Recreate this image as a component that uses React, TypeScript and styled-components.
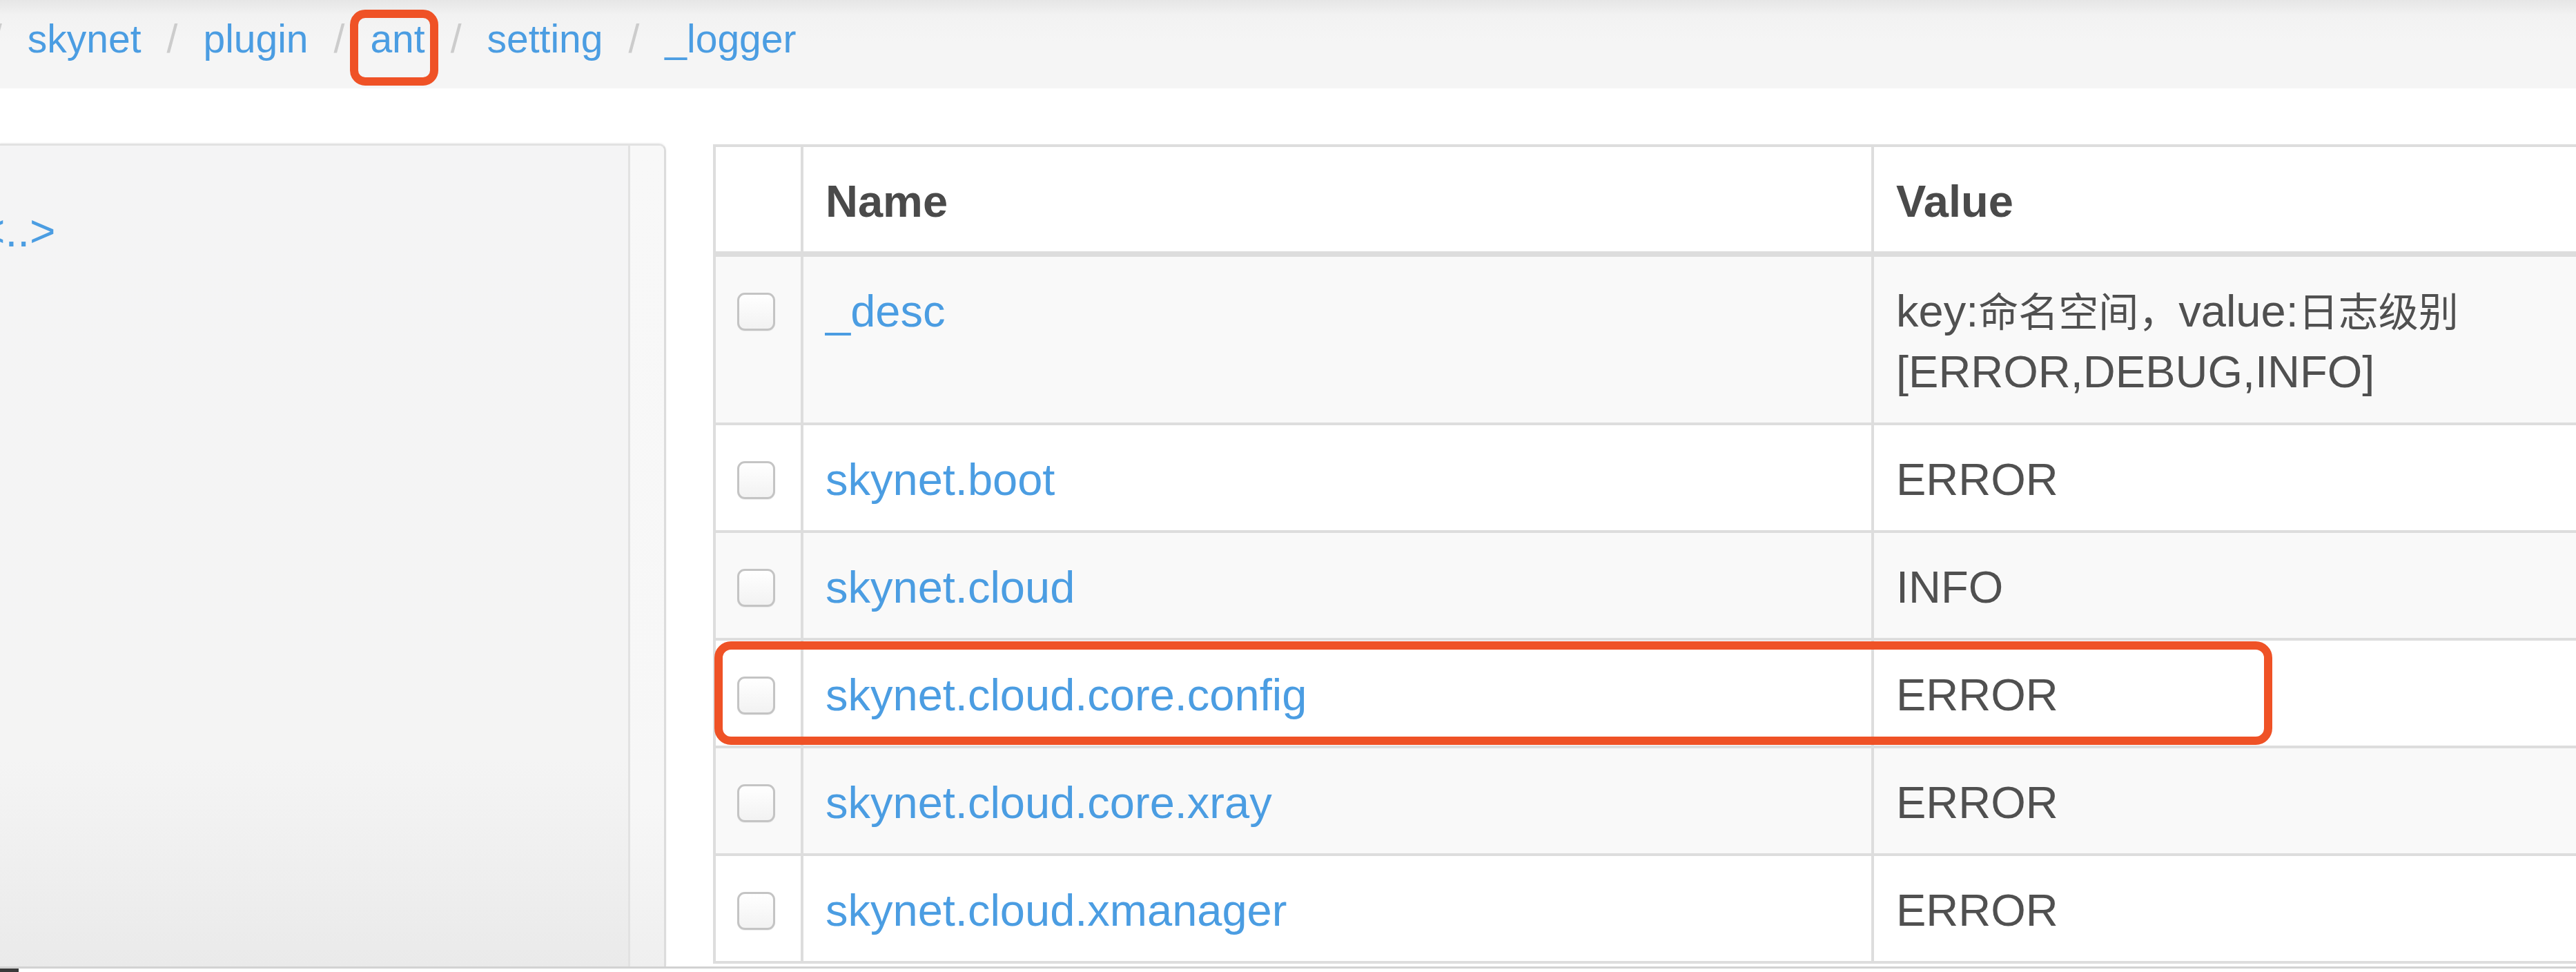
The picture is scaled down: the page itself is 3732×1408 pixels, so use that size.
import React from "react";
import styled, { createGlobalStyle } from "styled-components";

const GlobalStyle = createGlobalStyle`
  html, body {
    margin: 0;
    padding: 0;
    background: #ffffff;
    overflow: hidden;
  }
  body {
    font-family: "Liberation Sans", Arial, "Noto Sans CJK SC", sans-serif;
  }
  #root {
    width: 3732px;
    height: 1408px;
    overflow: hidden;
  }
`;

const Page = styled.div`
  width: 3732px;
  height: 1408px;
  display: flex;
  flex-direction: column;
  overflow: hidden;
`;

const BreadcrumbBar = styled.nav`
  flex: none;
  height: 128px;
  box-sizing: border-box;
  padding-top: 16px;
  background: linear-gradient(#e6e6e6 0px, #f2f2f2 22px, #f5f5f5 60px);
`;

const Crumbs = styled.ol`
  list-style: none;
  margin: 0 0 0 -13px;
  padding: 0;
  display: flex;
  gap: 37px;
  font-size: 57px;
  line-height: 80px;
  white-space: nowrap;
`;

const Crumb = styled.li`
  display: flex;
  &::before {
    content: "/";
    color: #cccccc;
    padding-right: 37px;
  }
`;

const CrumbLink = styled.a<{ $marked?: boolean }>`
  position: relative;
  display: inline-block;
  color: #4b9de2;
  text-decoration: none;
  ${(p) =>
    p.$marked
      ? `
    &::after {
      content: "";
      position: absolute;
      left: -29px;
      right: -19px;
      top: -2px;
      bottom: -28px;
      border: 12px solid #ef5226;
      border-radius: 22px;
      box-sizing: border-box;
    }
  `
      : ""}
`;

const Main = styled.main`
  flex: 1;
  min-height: 0;
  display: flex;
  align-items: stretch;
  gap: 68px;
  padding-top: 80px;
  box-sizing: border-box;
`;

const FilePanel = styled.aside`
  flex: none;
  width: 965px;
  display: flex;
  box-sizing: border-box;
  border-top: 3px solid #e2e2e2;
  border-right: 3px solid #dcdcdc;
  border-top-right-radius: 10px;
  box-shadow: 0 -1px 3px rgba(0, 0, 0, 0.05);
  overflow: hidden;
`;

const TreeList = styled.div`
  flex: none;
  width: 910px;
  padding-top: 80px;
  box-sizing: border-box;
  background: linear-gradient(#f4f4f5 0%, #f4f4f4 75%, #eaeaea 100%);
`;

const TreeRail = styled.div`
  flex: 1;
  border-left: 3px solid #e2e2e2;
  background: linear-gradient(#f8f8f8 0%, #f7f7f7 80%, #efefef 100%);
`;

const ParentLink = styled.a`
  display: block;
  margin-left: -30px;
  font-size: 64px;
  line-height: 88px;
  color: #4b9de2;
  text-decoration: none;
`;

const TableWrap = styled.section`
  flex: none;
  width: 2800px;
  margin-top: 1px;
`;

const Table = styled.table`
  width: 100%;
  table-layout: fixed;
  border-collapse: separate;
  border-spacing: 0;
  border-top: 4px solid #dddddd;
  border-left: 4px solid #dddddd;
  font-size: 65px;
  line-height: 88px;
  color: #505050;
`;

const HeadCell = styled.th`
  box-sizing: border-box;
  text-align: left;
  vertical-align: top;
  font-weight: bold;
  color: #4a4a4a;
  background: #ffffff;
  padding: 35px 32px 28px;
  border-right: 4px solid #dddddd;
  border-bottom: 8px solid #dddddd;
`;

const Row = styled.tr<{ $striped?: boolean }>`
  background: ${(p) => (p.$striped ? "#f9f9f9" : "#ffffff")};
`;

const Cell = styled.td<{ $check?: boolean }>`
  box-sizing: border-box;
  vertical-align: top;
  padding: ${(p) => (p.$check ? "35px 0 29px 31px" : "35px 32px 29px")};
  border-right: 4px solid #dddddd;
  border-bottom: 4px solid #dddddd;
  position: ${(p) => (p.$check ? "relative" : "static")};
`;

const KeyLink = styled.a`
  color: #4b9de2;
  text-decoration: none;
`;

const Cjk = styled.span`
  font-family: "Noto Sans CJK SC", sans-serif;
  font-size: 58px;
  line-height: 1;
`;

const CheckBox = styled.span`
  display: block;
  width: 55px;
  height: 55px;
  margin-top: 17px;
  box-sizing: border-box;
  border: 3px solid #c4c4c4;
  border-radius: 11px;
  background: linear-gradient(#ffffff, #f2f2f2);
  box-shadow: 0 1px 1px rgba(0, 0, 0, 0.06);
`;

const RowHighlight = styled.span`
  position: absolute;
  left: -2px;
  top: 1px;
  width: 2257px;
  height: 150px;
  box-sizing: border-box;
  border: 12px solid #ef5226;
  border-radius: 24px;
  pointer-events: none;
`;

const Footer = styled.footer`
  flex: none;
  height: 8px;
  box-sizing: border-box;
  border-top: 3px solid #d2d2d2;
  background: #ffffff;
  display: flex;
  &::before {
    content: "";
    width: 27px;
    background: #3a3a3a;
  }
`;

const crumbs = ["skynet", "plugin", "ant", "setting", "_logger"];

type Entry = { key: string; value: React.ReactNode; marked?: boolean };

const rows: Entry[] = [
  {
    key: "_desc",
    value: (
      <>
        key:<Cjk>命名空间，</Cjk>value:<Cjk>日志级别</Cjk> [ERROR,DEBUG,INFO]
      </>
    ),
  },
  { key: "skynet.boot", value: "ERROR" },
  { key: "skynet.cloud", value: "INFO" },
  { key: "skynet.cloud.core.config", value: "ERROR", marked: true },
  { key: "skynet.cloud.core.xray", value: "ERROR" },
  { key: "skynet.cloud.xmanager", value: "ERROR" },
];

export default function App() {
  return (
    <Page>
      <GlobalStyle />
      <BreadcrumbBar>
        <Crumbs>
          {crumbs.map((c) => (
            <Crumb key={c}>
              <CrumbLink href="#" $marked={c === "ant"}>
                {c}
              </CrumbLink>
            </Crumb>
          ))}
        </Crumbs>
      </BreadcrumbBar>
      <Main>
        <FilePanel>
          <TreeList>
            <ParentLink href="#">&lt;..&gt;</ParentLink>
          </TreeList>
          <TreeRail />
        </FilePanel>
        <TableWrap>
          <Table>
            <colgroup>
              <col style={{ width: 127 }} />
              <col style={{ width: 1551 }} />
              <col />
            </colgroup>
            <thead>
              <tr>
                <HeadCell />
                <HeadCell>Name</HeadCell>
                <HeadCell>Value</HeadCell>
              </tr>
            </thead>
            <tbody>
              {rows.map((r, i) => (
                <Row key={r.key} $striped={i % 2 === 0}>
                  <Cell $check>
                    <CheckBox />
                    {r.marked && <RowHighlight />}
                  </Cell>
                  <Cell>
                    <KeyLink href="#">{r.key}</KeyLink>
                  </Cell>
                  <Cell>{r.value}</Cell>
                </Row>
              ))}
            </tbody>
          </Table>
        </TableWrap>
      </Main>
      <Footer />
    </Page>
  );
}
